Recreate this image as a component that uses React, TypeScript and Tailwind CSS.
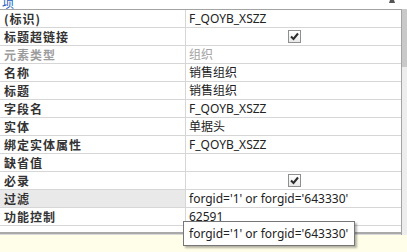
import React from "react";

type Row = { label: string; value?: string; check?: boolean; muted?: boolean; selected?: boolean };

const rows: Row[] = [
  { label: "(标识)", value: "F_QOYB_XSZZ" },
  { label: "标题超链接", check: true },
  { label: "元素类型", value: "组织", muted: true },
  { label: "名称", value: "销售组织" },
  { label: "标题", value: "销售组织" },
  { label: "字段名", value: "F_QOYB_XSZZ" },
  { label: "实体", value: "单据头" },
  { label: "绑定实体属性", value: "F_QOYB_XSZZ" },
  { label: "缺省值", value: "" },
  { label: "必录", check: true },
  { label: "过滤", value: "forgid='1' or forgid='643330'", selected: true },
  { label: "功能控制", value: "62591" },
];

function Check() {
  return (
    <div className="w-[13px] h-[13px] border border-[#8e8f8f] bg-gradient-to-b from-[#ffffff] to-[#e9e9e9] flex items-center justify-center">
      <svg width="11" height="11" viewBox="0 0 11 11">
        <path d="M2 5.5 L4.5 8 L9 2.5" fill="none" stroke="#2b2b2b" strokeWidth="2" />
      </svg>
    </div>
  );
}

export default function App() {
  return (
    <div className="w-[407px] h-[252px] bg-[#fffee8] flex flex-col overflow-hidden relative font-['Noto_Sans','Noto_Sans_CJK_SC',sans-serif] text-[12px] text-[#222]">
      <div className="h-[9px] bg-white flex items-end overflow-hidden">
        <span className="pl-[2px] leading-[13px] h-[13px] text-[#1f5fbf] font-['Noto_Sans_CJK_SC',sans-serif]">项</span>
        <div className="ml-auto mr-[12px] self-start">
          <svg width="6" height="3" viewBox="0 0 6 3">
            <path d="M1 0 H5 L6 3 H0 Z" fill="#555" />
          </svg>
        </div>
      </div>
      <div className="h-[226px] bg-white flex">
        <div className="w-[401px] flex flex-col border-t border-[#a3a3a3]">
          {rows.map((r, i) => (
            <div key={i} className="h-[18px] flex border-b border-[#d6d6d6]">
              <div
                className={
                  "w-[186px] border-r border-[#d6d6d6] pl-[4px] flex items-center font-bold tracking-[1px] font-['Noto_Sans_CJK_SC',sans-serif] " +
                  (r.muted ? "text-[#9c9c9c] " : "text-[#333] ") +
                  (r.selected ? "bg-[#e9e9e9]" : "")
                }
              >
                {r.label}
              </div>
              <div className={"flex-1 flex items-center pl-[3px] " + (r.muted ? "text-[#a3a3a3]" : "text-[#222]") + (r.check ? " justify-center pl-0 pr-[2px]" : "")}>
                {r.check ? <Check /> : r.value}
              </div>
            </div>
          ))}
          <div className="flex-1" />
          <div className="h-[2px] bg-[#a9a9a9]" />
          <div className="h-[1px] bg-[#d9d9d9]" />
        </div>
        <div className="flex-1 border-l border-[#a3a3a3] bg-[#ededed] flex flex-col">
          <div className="h-[58px] bg-[#c9c9c9]" />
        </div>
      </div>
      <div className="absolute left-[183px] top-[221px] w-[172px] h-[25px] bg-white border border-[#767676] shadow-[2px_2px_2px_rgba(0,0,0,0.3)] flex items-center pl-[5px] text-[#222]">
        forgid='1' or forgid='643330'
      </div>
    </div>
  );
}
